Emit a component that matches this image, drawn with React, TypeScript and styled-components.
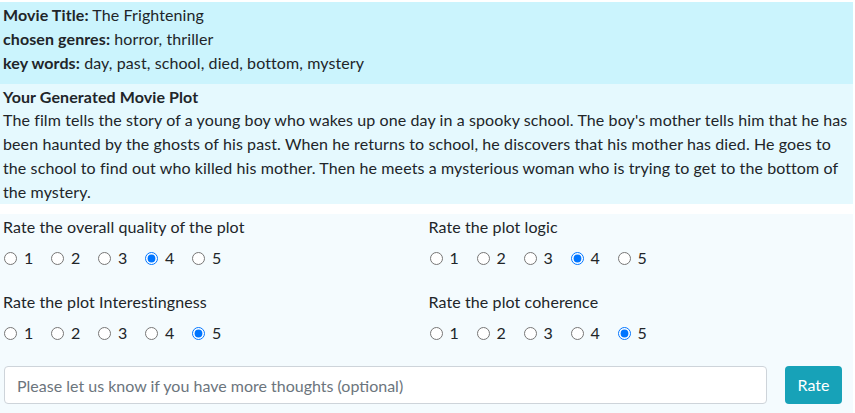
import React, { useState } from "react";
import styled, { createGlobalStyle } from "styled-components";

const GlobalStyle = createGlobalStyle`
    body {
        margin: 0;
        background: #fff;
        font-family: "Segoe UI", Lato, "Open Sans", sans-serif;
        font-size: 16px;
        line-height: 24px;
        letter-spacing: 0.1px;
        color: #212529;
    }
`;

const Page = styled.div`
    padding: 2px 2px 0 0;
`;

const Info = styled.div`
    background: #cbf4fd;
    padding: 1px 3px 9px;
`;

const Line = styled.div`
    line-height: 24px;
`;

const Plot = styled.div`
    background: #e5f9fe;
    padding: 1px 3px 0;
`;

const PlotTitle = styled.div`
    font-weight: 700;
`;

const PlotBody = styled.div`
    white-space: nowrap;
    margin-top: -1px;
`;

const Rating = styled.div`
    background: #f4fbfe;
    margin-top: 10px;
    padding: 1px 3px 10px;
`;

const Grid = styled.div`
    display: grid;
    grid-template-columns: 1fr 1fr;
    column-gap: 4px;
    row-gap: 20px;
`;

const Question = styled.div`
    display: flex;
    flex-direction: column;
    gap: 7px;
`;

const Options = styled.div`
    display: flex;
    height: 24px;
    align-items: center;
`;

const Option = styled.label`
    display: flex;
    align-items: center;
    width: 47px;
    cursor: pointer;

    input {
        margin: 0 7px 0 1px;
        width: 13px;
        height: 13px;
    }
`;

const Footer = styled.form`
    display: flex;
    align-items: center;
    gap: 18px;
    margin-top: 21px;
    padding-right: 8px;
`;

const Thoughts = styled.input`
    flex: 1;
    height: 38px;
    box-sizing: border-box;
    margin-left: 1px;
    padding: 6px 12px;
    font: inherit;
    color: #495057;
    border: 1px solid #ced4da;
    border-radius: 4px;
    background: #fff;

    &::placeholder {
        color: #6c757d;
    }
`;

const RateButton = styled.button`
    height: 38px;
    width: 57px;
    padding: 0;
    font: inherit;
    color: #fff;
    background: #17a2b8;
    border: none;
    border-radius: 4px;
`;

type Q = { key: string; text: string; value: number };

const initial: Q[] = [
    { key: "quality", text: "Rate the overall quality of the plot", value: 4 },
    { key: "logic", text: "Rate the plot logic", value: 4 },
    { key: "interest", text: "Rate the plot Interestingness", value: 5 },
    { key: "coherence", text: "Rate the plot coherence", value: 5 },
];

const plotLines = [
    "The film tells the story of a young boy who wakes up one day in a spooky school. The boy's mother tells him that he has",
    "been haunted by the ghosts of his past. When he returns to school, he discovers that his mother has died. He goes to",
    "the school to find out who killed his mother. Then he meets a mysterious woman who is trying to get to the bottom of",
    "the mystery.",
];

const App: React.FC = () => {
    const [questions, setQuestions] = useState(initial);
    const [thoughts, setThoughts] = useState("");

    const pick = (key: string, value: number) => {
        setQuestions(questions.map(q => (q.key === key ? { ...q, value } : q)));
    };

    return (
        <Page>
            <GlobalStyle />
            <Info>
                <Line><b>Movie Title:</b> The Frightening</Line>
                <Line><b>chosen genres:</b> horror, thriller</Line>
                <Line><b>key words:</b> day, past, school, died, bottom, mystery</Line>
            </Info>
            <Plot>
                <PlotTitle>Your Generated Movie Plot</PlotTitle>
                <PlotBody>
                    {plotLines.map((l, i) => (
                        <div key={i}>{l}</div>
                    ))}
                </PlotBody>
            </Plot>
            <Rating>
                <Grid>
                    {questions.map(q => (
                        <Question key={q.key}>
                            <div>{q.text}</div>
                            <Options>
                                {[1, 2, 3, 4, 5].map(n => (
                                    <Option key={n}>
                                        <input
                                            type="radio"
                                            name={q.key}
                                            checked={q.value === n}
                                            onChange={() => pick(q.key, n)}
                                        />
                                        {n}
                                    </Option>
                                ))}
                            </Options>
                        </Question>
                    ))}
                </Grid>
                <Footer onSubmit={e => e.preventDefault()}>
                    <Thoughts
                        type="text"
                        value={thoughts}
                        onChange={e => setThoughts(e.target.value)}
                        placeholder="Please let us know if you have more thoughts (optional)"
                    />
                    <RateButton type="submit">Rate</RateButton>
                </Footer>
            </Rating>
        </Page>
    );
};

export default App;
